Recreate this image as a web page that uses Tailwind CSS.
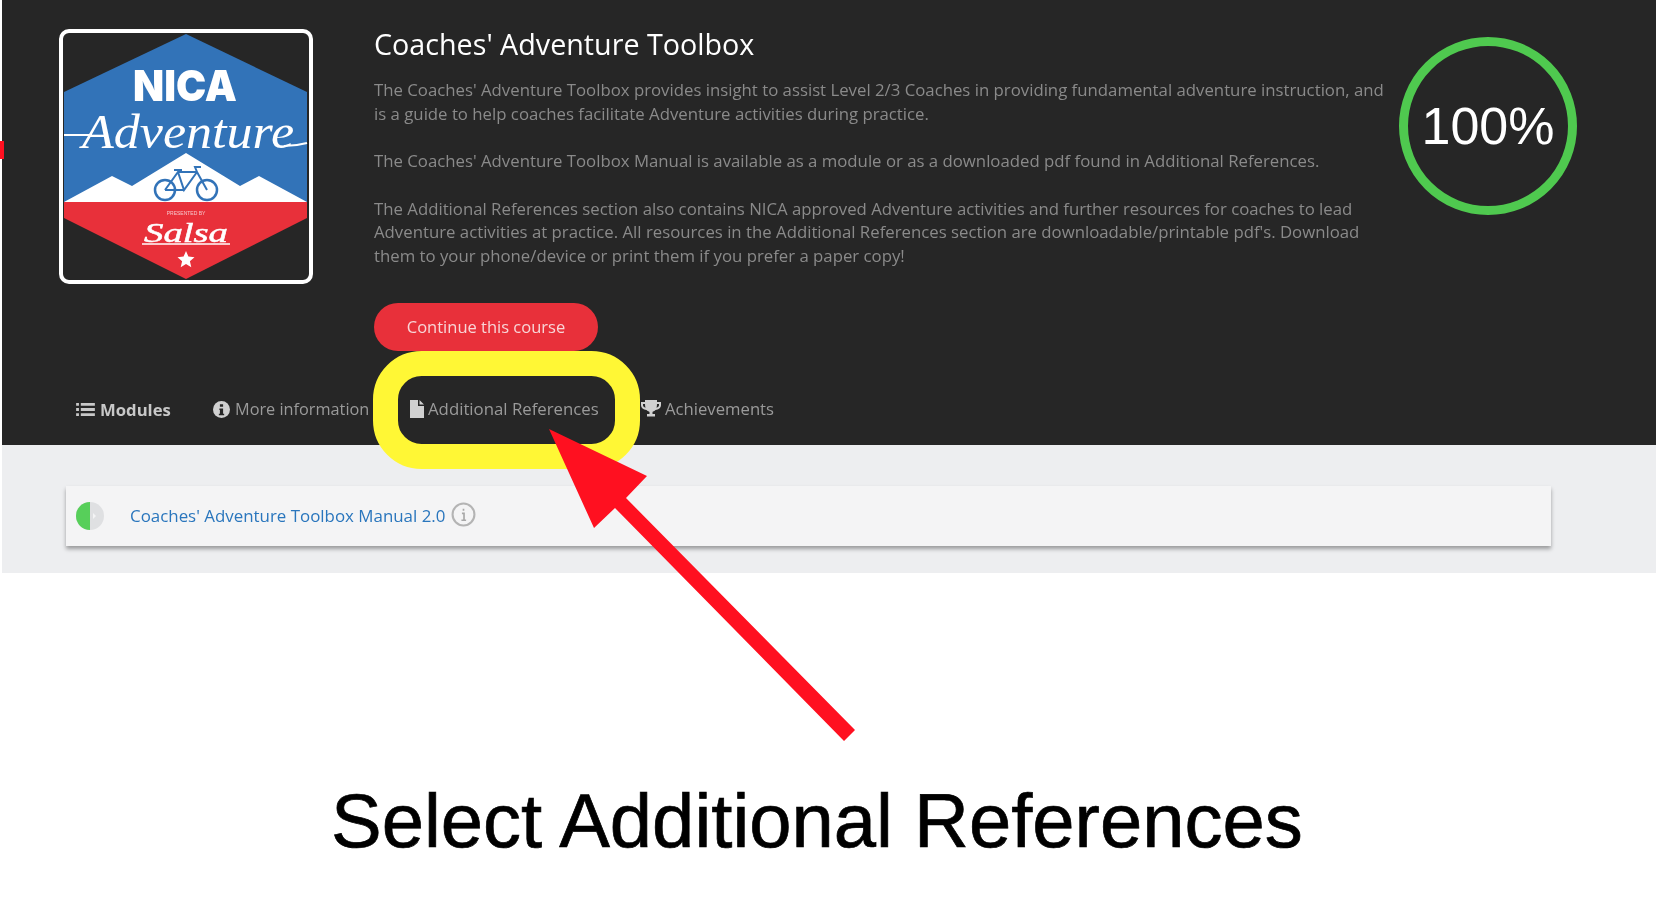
<!DOCTYPE html>
<html lang="en">
  <head>
    <meta charset="UTF-8" />
    <meta name="viewport" content="width=device-width, initial-scale=1.0" />
    <title>Select Additional References</title>
    <script src="https://cdn.jsdelivr.net/npm/@tailwindcss/browser@4"></script>
  </head>
  <body class="relative bg-white w-[1656px] h-[910px] overflow-hidden font-['Open_Sans',sans-serif]">
    <div class="absolute left-0 top-[141px] w-[4px] h-[18px] bg-[#ff1020] z-10"></div>

    <div class="ml-[2px] blur-[0.6px]">
      <!-- course header -->
      <header class="bg-[#262626] h-[445px] flex flex-col">
        <div class="flex items-start pl-[57px] h-[303px]">
          <div class="w-[254px] h-[255px] mt-[29px] shrink-0 border-[4px] border-white rounded-[10px]">
            <svg viewBox="63 33 246 247" class="w-full h-full">
              <polygon points="186,34 307,92 307,202 64,202 64,92" fill="#3273b8" />
              <polygon points="64,202 307,202 307,218 186,279 64,218" fill="#e8303a" />
              <polygon points="64,202 112,176 132,186 186,153 240,186 259,176 307,202" fill="#fff" />
              <text x="185" y="101" text-anchor="middle" font-family="Inter, sans-serif" font-weight="900" font-size="43" textLength="104" lengthAdjust="spacingAndGlyphs" fill="#fff">NICA</text>
              <path d="M64 135 H92 M284 146 Q296 146 307 143" stroke="#fff" stroke-width="2" fill="none" />
              <text x="82" y="148" font-family="Liberation Serif, serif" font-style="italic" font-size="48" textLength="212" lengthAdjust="spacingAndGlyphs" fill="#fff">Adventure</text>
              <g stroke="#3273b8" fill="none" stroke-width="2.5">
                <circle cx="165" cy="190" r="10" />
                <circle cx="207" cy="190" r="10" />
                <path d="M165 190 L178 172 H197 L207 190 M178 172 L184 190 L197 172 M165 190 H184 M174 170 H182 M197 172 L195 167 H201" stroke-width="2" />
              </g>
              <text x="186" y="215" text-anchor="middle" font-family="Liberation Sans, sans-serif" font-size="5" fill="#f6c6ca">PRESENTED BY</text>
              <text x="186" y="242" text-anchor="middle" font-family="Liberation Serif, serif" font-style="italic" font-size="27" textLength="84" lengthAdjust="spacingAndGlyphs" fill="#fff" stroke="#fff" stroke-width="0.5">Salsa</text>
              <path d="M142 244 H230" stroke="#fff" stroke-width="1.500" />
              <polygon points="186,251 188.400,256.600 194.500,257.200 189.900,261.200 191.300,267.200 186,264 180.700,267.200 182.100,261.200 177.500,257.200 183.600,256.600" fill="#fff" />
            </svg>
          </div>

          <div class="ml-[61px] w-[1025px] shrink-0">
            <h1 class="mt-[27px] text-[28.700px] leading-[34px] text-white whitespace-nowrap">Coaches' Adventure Toolbox</h1>
            <p class="mt-[17px] text-[16.770px] leading-[23.700px] text-[#8a8a8a] whitespace-nowrap">
              The Coaches' Adventure Toolbox provides insight to assist Level 2/3 Coaches in providing fundamental adventure instruction, and<br />
              is a guide to help coaches facilitate Adventure activities during practice.<br /><br />
              The Coaches' Adventure Toolbox Manual is available as a module or as a downloaded pdf found in Additional References.<br /><br />
              The Additional References section also contains NICA approved Adventure activities and further resources for coaches to lead<br />
              Adventure activities at practice. All resources in the Additional References section are downloadable/printable pdf's. Download<br />
              them to your phone/device or print them if you prefer a paper copy!
            </p>
          </div>

          <div class="mt-[37px] w-[178px] h-[178px] shrink-0 rounded-full border-[9px] border-[#4fc94f] flex items-center justify-center">
            <span class="font-['Liberation_Sans',sans-serif] text-[52px] font-light text-white">100%</span>
          </div>
        </div>

        <div class="pl-[372px]">
          <button class="w-[224px] h-[48px] rounded-full bg-[#e8303a] text-[16.500px] text-[#f8d5d7]">Continue this course</button>
        </div>

        <nav class="relative h-[94px] text-[16.300px] text-[#9a9a9a]">
          <a class="absolute left-[74px] top-[46px] flex items-center gap-[5px] text-[16.700px] font-bold text-[#c8c8c8]">
            <svg viewBox="0 0 20 16" class="w-[19px] h-[15px]" fill="currentColor">
              <path d="M0 1h3v3H0zM5 1h15v3H5zM0 6.500h3v3H0zM5 6.500h15v3H5zM0 12h3v3H0zM5 12h15v3H5z" />
            </svg>
            Modules
          </a>
          <a class="absolute left-[211px] top-[46px] flex items-center gap-[5px]">
            <svg viewBox="0 0 16 16" class="w-[17px] h-[17px]">
              <circle cx="8" cy="8" r="8" fill="#d0d0d0" />
              <path d="M6.500 3h3v2.500h-3zM6 7h3.500v5H10.500v1.500h-5V12h1V8.500H6z" fill="#262626" />
            </svg>
            More information
          </a>
          <a class="absolute left-[408px] top-[45px] flex items-center gap-[4px] text-[16.800px]">
            <svg viewBox="0 0 14 18" class="w-[14px] h-[18px]" fill="#d0d0d0">
              <path d="M0 0H8V6H14V18H0zM9.500 0L14 4.500H9.500z" />
            </svg>
            Additional References
          </a>
          <a class="absolute left-[639px] top-[45px] flex items-center gap-[4px] text-[16.700px]">
            <svg viewBox="0 0 20 18" class="w-[20px] h-[18px]" fill="#d0d0d0">
              <path d="M4 0H16V2H20V5C20 8 17.500 9.500 14.500 10C13.500 11 12 11.500 11.500 12V14H14V16.500H6V14H8.500V12C8 11.500 6.500 11 5.500 10C2.500 9.500 0 8 0 5V2H4zM2 4V5C2 6.300 3 7.300 4.500 7.800C4.200 6.600 4 5.300 4 4zM18 4H16C16 5.300 15.800 6.600 15.500 7.800C17 7.300 18 6.300 18 5z" />
            </svg>
            Achievements
          </a>
        </nav>
      </header>

      <!-- module list -->
      <section class="bg-[#edeef0] h-[128px] pt-[41px] pl-[64px] pr-[105px]">
        <div class="h-[60px] bg-[#f4f4f5] shadow-[0_3px_4px_rgba(0,0,0,0.35)] flex items-center pl-[10px]">
          <svg viewBox="0 0 28 28" class="w-[28px] h-[32px] shrink-0">
            <circle cx="14" cy="14" r="14" fill="#dfe0e2" />
            <path d="M14 0A14 14 0 0 0 14 28z" fill="#57cf5a" />
            <path d="M17 11l3 3-3 3z" fill="#f4f4f5" />
          </svg>
          <a class="ml-[26px] text-[16.900px] text-[#2a76bd] whitespace-nowrap">Coaches' Adventure Toolbox Manual 2.0</a>
          <svg viewBox="0 0 24 24" class="ml-[6px] -mt-[4px] w-[25px] h-[25px] shrink-0" fill="none">
            <circle cx="12" cy="12" r="10.500" stroke="#b4b4b4" stroke-width="2" />
            <path d="M12 6.500v2M10.500 11h2v6.500M10 17.500h4.500" stroke="#a8a8a8" stroke-width="1.600" />
          </svg>
        </div>
      </section>
    </div>

    <!-- annotation over the screenshot -->
    <svg class="absolute inset-0 w-[1656px] h-[910px] pointer-events-none" viewBox="0 0 1656 910">
      <rect x="385.500" y="363.500" width="242" height="93" rx="36" fill="none" stroke="#fff735" stroke-width="25" />
      <polygon points="549,429 647,476 626,498 855,730 844,741 615,508 594,528" fill="#ff1020" />
    </svg>

    <p class="absolute left-[331px] top-[771px] font-['Liberation_Sans',sans-serif] text-[76px] leading-[100px] text-black [-webkit-text-stroke:0.7px_black] whitespace-nowrap">Select Additional References</p>
  </body>
</html>
